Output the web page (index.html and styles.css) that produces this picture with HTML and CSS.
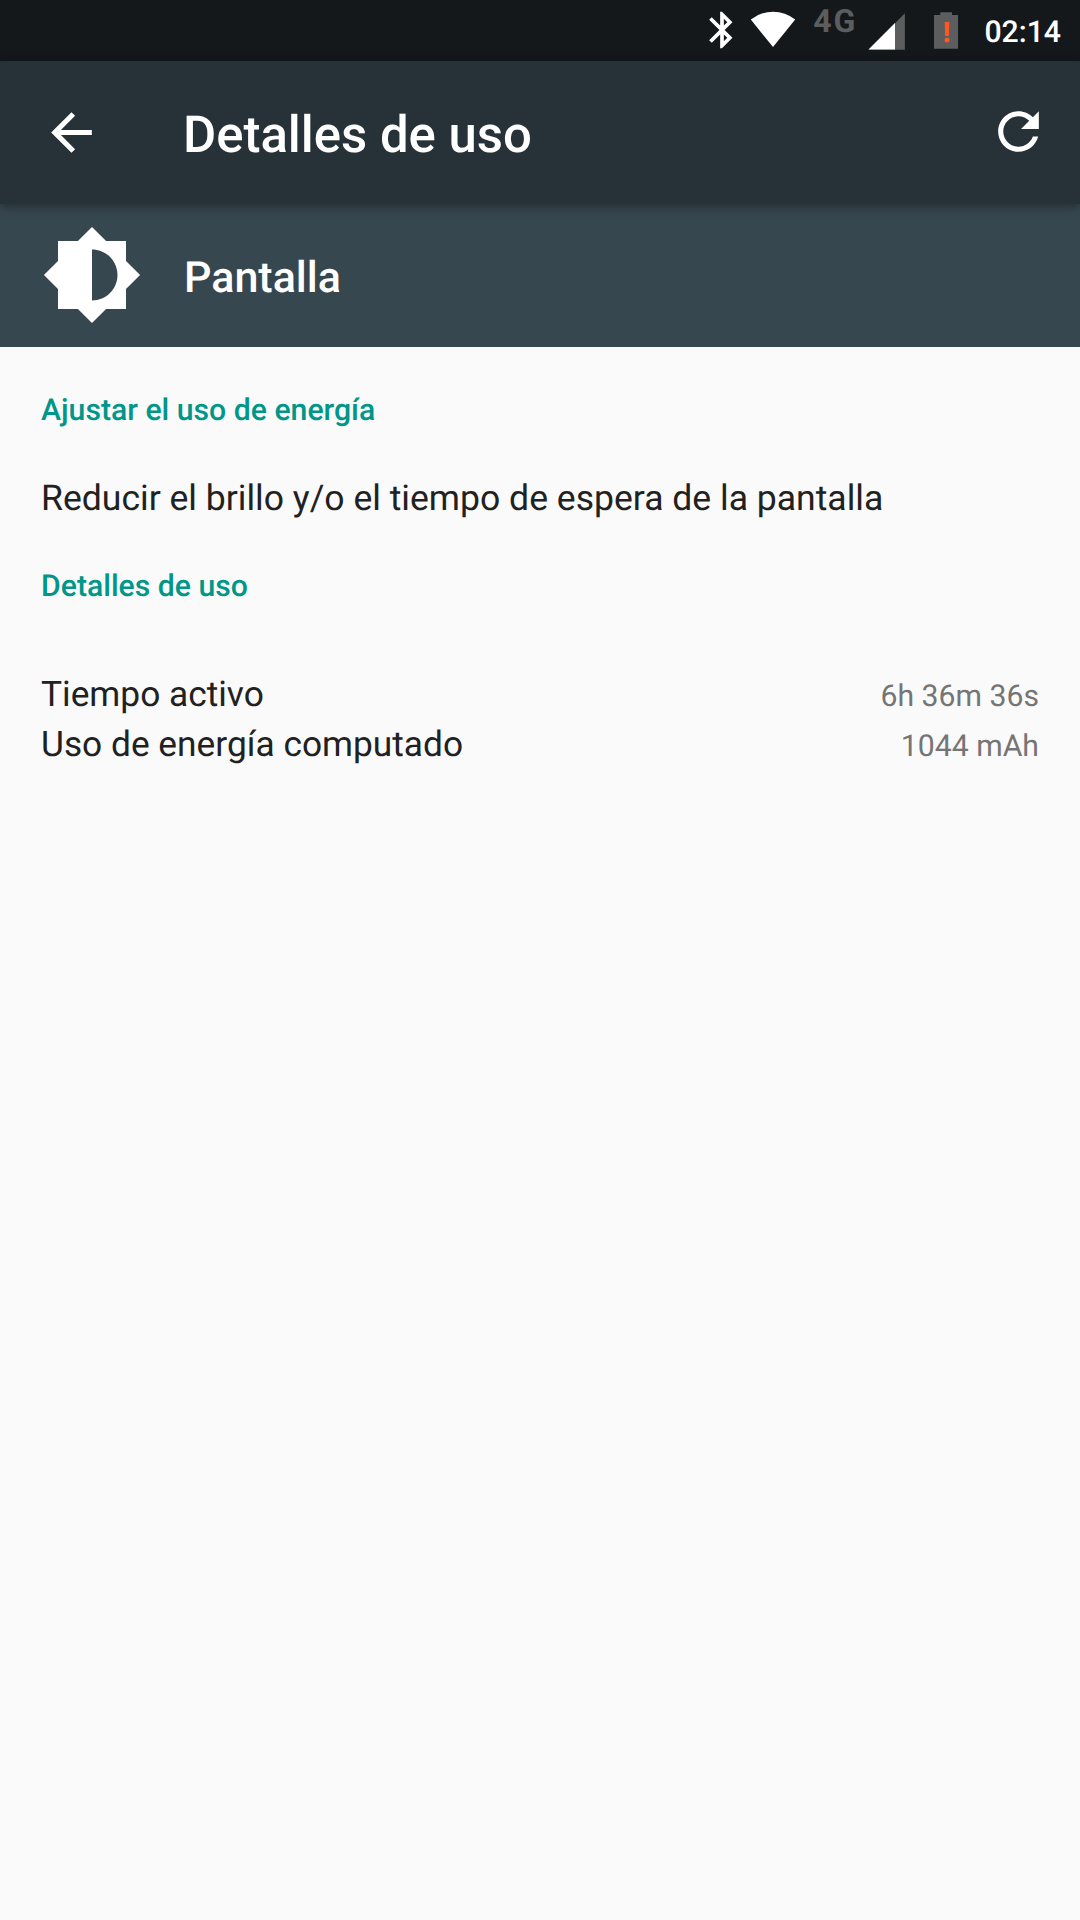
FILE: index.html
```html
<!DOCTYPE html>
<html lang="es">
<head>
<meta charset="utf-8">
<meta name="viewport" content="width=device-width,initial-scale=1">
<title>Detalles de uso</title>
<link rel="stylesheet" href="styles.css">
</head>
<body>
<div class="status">
<svg class="bluetooth" width="44" height="44" viewBox="0 0 24 24"><path d="M17.71 7.71L12 2h-1v7.59L6.41 5 5 6.41 10.59 12 5 17.59 6.41 19 11 14.41V22h1l5.71-5.71-4.3-4.29 4.3-4.29zM13 5.83l1.88 1.88L13 9.59V5.83zm1.88 10.46L13 18.17v-3.76l1.88 1.88z"/></svg>
<svg class="wifi" width="46" height="61" viewBox="0 0 46 61"><path d="M.8 19.6Q10.500 11.700 23 11.700T45.200 19.600L23 47z"/></svg>
<span class="network">4G</span>
<svg class="signal" width="38" height="61" viewBox="0 0 38 61"><path class="dim" d="M.5 49.800L36.900 13.300V49.800z"/><path d="M.5 49.500L27 23V49.500z"/></svg>
<svg class="battery" width="24" height="61" viewBox="0 0 24 61"><path class="dim" d="M6.300 12.300H18V15H24V48.700H0V15H6.300z"/><path class="alert" d="M10.700 22h4.600l-.4 14h-3.800z"/><circle class="alert" cx="13" cy="40" r="2.500"/></svg>
<span class="clock">02:14</span>
</div>
<header class="toolbar">
<svg width="61" height="61" viewBox="0 0 24 24"><path d="M20 11H7.830l5.590-5.590L12 4l-8 8 8 8 1.410-1.410L7.830 13H20v-2z"/></svg>
<h1>Detalles de uso</h1>
<svg class="refresh" width="61" height="61" viewBox="0 0 24 24"><path d="M17.650 6.350C16.200 4.900 14.210 4 12 4c-4.420 0-7.990 3.580-7.990 8s3.570 8 7.990 8c3.730 0 6.840-2.550 7.730-6h-2.080c-.82 2.330-3.040 4-5.650 4-3.310 0-6-2.690-6-6s2.690-6 6-6c1.660 0 3.140.69 4.220 1.780L13 11h7V4l-2.350 2.350z"/></svg>
</header>
<div class="app">
<svg width="102" height="102" viewBox="0 0 24 24"><path d="M20 15.310L23.310 12 20 8.690V4h-4.690L12 .69 8.690 4H4v4.690L.69 12 4 15.310V20h4.690L12 23.310 15.310 20H20v-4.690zM12 18V6c3.310 0 6 2.690 6 6s-2.690 6-6 6z"/></svg>
<h2>Pantalla</h2>
</div>
<main>
<h3>Ajustar el uso de energía</h3>
<p class="tip">Reducir el brillo y/o el tiempo de espera de la pantalla</p>
<h3>Detalles de uso</h3>
<dl>
<div class="row"><dt>Tiempo activo</dt><dd>6h 36m 36s</dd></div>
<div class="row"><dt>Uso de energía computado</dt><dd>1044 mAh</dd></div>
</dl>
</main>
</body>
</html>
```

FILE: styles.css
```css
body {
 background: #FAFAFA;
 color: #212121;
 font-family: Roboto, sans-serif;
 font-size: 35.55px;
 margin: 0;
 text-rendering: geometricPrecision;
}
h1, h2, h3, p, dl, dt, dd {
 margin: 0;
 padding: 0;
}
h1, h2, h3 {
 font-weight: 500;
}
svg {
 display: block;
 fill: #FFF;
 flex: none;
}
.status {
 background: #14181B;
 color: #FFF;
 display: flex;
 height: 61px;
 justify-content: flex-end;
 padding-right: 19px;
}
.bluetooth {
 margin: 8px 6px 0 0;
}
.dim {
 fill: #5B5D5E;
}
.alert {
 fill: #FF5722;
}
.network {
 color: #5B5D5E;
 font-size: 32px;
 font-weight: 700;
 letter-spacing: 2px;
 line-height: 43px;
 margin: 0 11px 0 17px;
}
.signal {
 margin-right: 28px;
}
.battery {
 margin-right: 26px;
}
.clock {
 font-size: 30.2px;
 font-weight: 500;
 line-height: 65px;
}
.toolbar {
 align-items: center;
 background: #263238;
 box-shadow: 0 2px 10px rgba(0,0,0,0.4);
 color: #FFF;
 display: flex;
 height: 143px;
 padding: 0 31px 0 41px;
 position: relative;
}
.refresh {
 margin-bottom: 2px;
}
h1 {
 flex: 1;
 font-size: 50.9px;
 line-height: 60px;
 padding: 6px 0 0 81px;
}
.app {
 align-items: center;
 background: #37474F;
 color: #FFF;
 display: flex;
 height: 143px;
 padding-left: 41px;
}
.app svg {
 margin-bottom: 2px;
}
h2 {
 font-size: 43px;
 line-height: 50px;
 padding: 5px 0 0 41px;
}
main {
 padding: 42px 41px 0;
}
h3 {
 color: #009688;
 font-size: 30.2px;
 line-height: 44px;
}
.tip {
 line-height: 50px;
 padding: 40px 0 42px;
}
dl {
 padding-top: 60px;
}
.row {
 align-items: baseline;
 display: flex;
 font-size: 35.3px;
 justify-content: space-between;
 line-height: 50px;
}
dd {
 color: #757575;
 font-size: 30.2px;
 line-height: 1;
}
```
